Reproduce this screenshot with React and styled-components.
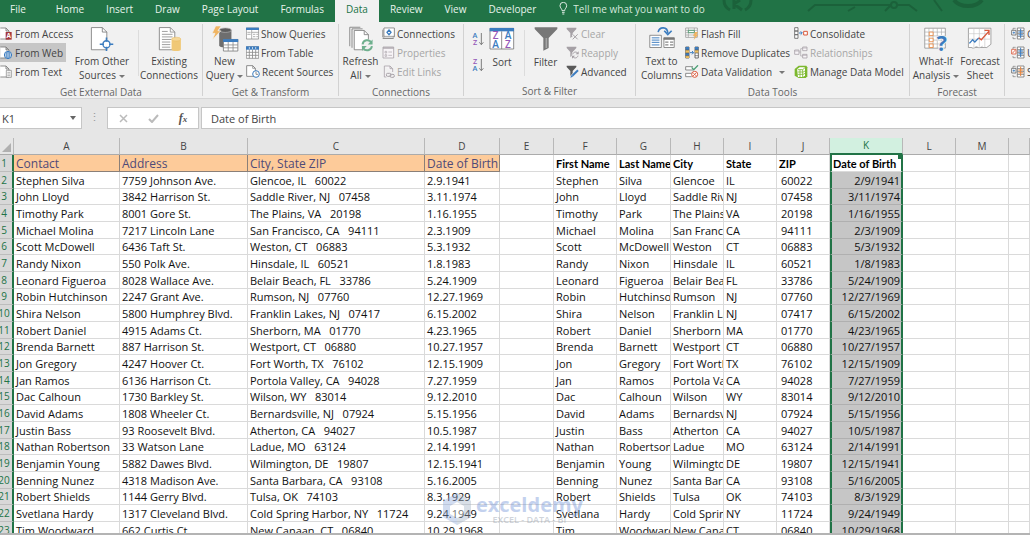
import React from "react";
import styled, { createGlobalStyle, css } from "styled-components";

const GlobalStyle = createGlobalStyle`
  * {
    box-sizing: border-box;
  }
  body {
    margin: 0;
    background: #e6e6e6;
    font-family: "Open Sans", "Noto Sans", sans-serif;
    font-size: 10px;
    color: #444;
  }
  button, input {
    font: inherit;
    color: inherit;
    border: 0;
    padding: 0;
    background: none;
  }
`;

/*========================================================
# Data
========================================================*/
const people = [
  ["Stephen Silva", "7759 Johnson Ave.", "Glencoe", "IL", "60022", "2.9.1941"],
  ["John Lloyd", "3842 Harrison St.", "Saddle River", "NJ", "07458", "3.11.1974"],
  ["Timothy Park", "8001 Gore St.", "The Plains", "VA", "20198", "1.16.1955"],
  ["Michael Molina", "7217 Lincoln Lane", "San Francisco", "CA", "94111", "2.3.1909"],
  ["Scott McDowell", "6436 Taft St.", "Weston", "CT", "06883", "5.3.1932"],
  ["Randy Nixon", "550 Polk Ave.", "Hinsdale", "IL", "60521", "1.8.1983"],
  ["Leonard Figueroa", "8028 Wallace Ave.", "Belair Beach", "FL", "33786", "5.24.1909"],
  ["Robin Hutchinson", "2247 Grant Ave.", "Rumson", "NJ", "07760", "12.27.1969"],
  ["Shira Nelson", "5800 Humphrey Blvd.", "Franklin Lakes", "NJ", "07417", "6.15.2002"],
  ["Robert Daniel", "4915 Adams Ct.", "Sherborn", "MA", "01770", "4.23.1965"],
  ["Brenda Barnett", "887 Harrison St.", "Westport", "CT", "06880", "10.27.1957"],
  ["Jon Gregory", "4247 Hoover Ct.", "Fort Worth", "TX", "76102", "12.15.1909"],
  ["Jan Ramos", "6136 Harrison Ct.", "Portola Valley", "CA", "94028", "7.27.1959"],
  ["Dac Calhoun", "1730 Barkley St.", "Wilson", "WY", "83014", "9.12.2010"],
  ["David Adams", "1808 Wheeler Ct.", "Bernardsville", "NJ", "07924", "5.15.1956"],
  ["Justin Bass", "93 Roosevelt Blvd.", "Atherton", "CA", "94027", "10.5.1987"],
  ["Nathan Robertson", "33 Watson Lane", "Ladue", "MO", "63124", "2.14.1991"],
  ["Benjamin Young", "5882 Dawes Blvd.", "Wilmington", "DE", "19807", "12.15.1941"],
  ["Benning Nunez", "4318 Madison Ave.", "Santa Barbara", "CA", "93108", "5.16.2005"],
  ["Robert Shields", "1144 Gerry Blvd.", "Tulsa", "OK", "74103", "8.3.1929"],
  ["Svetlana Hardy", "1317 Cleveland Blvd.", "Cold Spring Harbor", "NY", "11724", "9.24.1949"],
  ["Tim Woodward", "662 Curtis Ct.", "New Canaan", "CT", "06840", "10.29.1968"],
];

const columns = [
  { name: "A", width: 106 },
  { name: "B", width: 128 },
  { name: "C", width: 177 },
  { name: "D", width: 75 },
  { name: "E", width: 54 },
  { name: "F", width: 63 },
  { name: "G", width: 54 },
  { name: "H", width: 53 },
  { name: "I", width: 53 },
  { name: "J", width: 53 },
  { name: "K", width: 73, selected: true },
  { name: "L", width: 53 },
  { name: "M", width: 53 },
  { name: "" },
];

/*========================================================
# Icons
========================================================*/
// every icon is drawn on a grid three times finer than its size
const Icon = ({ w = 13, h = 13, children }) => (
  <svg width={w} height={h} viewBox={`0 0 ${w * 3} ${h * 3}`} fill="none" aria-hidden="true">
    {children}
  </svg>
);

const Letter = styled.text`
  font-family: "Open Sans", sans-serif;
  font-weight: ${({ $weight }) => $weight || 600};
  font-size: ${({ $size }) => $size || 22}px;
  text-anchor: middle;
  fill: ${({ $color }) => $color};
`;

const SmallPage = () => (
  <path d="M1 3h17l9 9v24H1M18 3v9h9" fill="#fff" stroke="#7a7a7a" strokeWidth="2.5" />
);

const AccessIcon = () => (
  <Icon>
    <SmallPage />
    <rect x="17" y="15" width="18" height="23" fill="#a4373a" />
    <Letter x="26" y="33" $size={19} $weight={700} $color="#fff">A</Letter>
  </Icon>
);
const WebIcon = () => (
  <Icon>
    <SmallPage />
    <circle cx="24" cy="27" r="11" fill="#fff" stroke="#3b7cbf" strokeWidth="3" />
    <path d="M13 27h22M24 16v22M15 21h18M15 33h18" stroke="#3b7cbf" strokeWidth="2" />
    <ellipse cx="24" cy="27" rx="5" ry="11" stroke="#3b7cbf" strokeWidth="2" />
  </Icon>
);
const TextIcon = () => (
  <Icon>
    <SmallPage />
    <path d="M19 16h15v21H19z" fill="#fff" stroke="#7a7a7a" strokeWidth="2" />
    <path d="M22 22h9M22 27h9M22 32h9" stroke="#888" strokeWidth="2" />
  </Icon>
);
const OtherSourcesIcon = () => (
  <Icon w={26} h={28}>
    <path d="M6 8h34l14 14v55H6z" fill="#fff" stroke="#777" strokeWidth="2.5" />
    <path d="M40 8v14h14" stroke="#777" strokeWidth="2.5" />
    <circle cx="53" cy="60" r="15" fill="#f1f1f1" />
    <circle cx="53" cy="60" r="11" fill="#fff" stroke="#3b7cbf" strokeWidth="4" />
    <path d="M53 39v13M53 68v13M32 60h13M61 60h13" stroke="#3b7cbf" strokeWidth="5" />
  </Icon>
);
const ExistingIcon = () => (
  <Icon w={26} h={28}>
    <path d="M9 8h34l14 14v55H9z" fill="#fff" stroke="#777" strokeWidth="2.5" />
    <path d="M43 8v14h14M17 29h33M17 37h33M17 45h30M17 53h26M17 61h26M17 69h26M17 20h18" stroke="#8a8a8a" strokeWidth="2.5" />
    <path d="M47 45v31c0 7 29 7 29 0V45" fill="#f0c877" />
    <ellipse cx="61.500" cy="44" rx="14.500" ry="6" fill="#f5d797" stroke="#e8b85c" strokeWidth="1.500" />
  </Icon>
);
const NewQueryIcon = () => (
  <Icon w={28} h={28}>
    <path d="M24 16v48c0 8 38 8 38 0V16" fill="#6e6e6e" />
    <ellipse cx="43" cy="16" rx="19" ry="7" fill="#5c5c5c" stroke="#bbb" strokeWidth="2" />
    <path d="M13 3h17L20 18h9L3 46l8-20H2z" fill="#f0b562" stroke="#f1f1f1" strokeWidth="2" />
    <path d="M37 45h45v36H37z" fill="#fff" stroke="#777" strokeWidth="2.5" />
    <path d="M36 44h47v9H36z" fill="#3b7cbf" />
    <path d="M37 62h45M37 71h45M52 53v28M67 53v28" stroke="#888" strokeWidth="2.5" />
  </Icon>
);
const ShowQueriesIcon = () => (
  <Icon>
    <path d="M1 3h37v33H1z" fill="#fff" stroke="#777" strokeWidth="2" />
    <path d="M0 2h39v7H0z" fill="#3b7cbf" />
    <path d="M17 9v27M17 16h21M4 16h10M4 22h10M21 22h7M21 29h7M31 22h5M31 29h5" stroke="#8c8c8c" strokeWidth="2" />
  </Icon>
);
const FromTableIcon = () => (
  <Icon>
    <path d="M1 2h37v35H1z" fill="#fff" stroke="#777" strokeWidth="2" />
    <path d="M0 1h39v10H0z" fill="#3b7cbf" />
    <path d="M1 19h37M1 28h37M10 11v26M19.500 11v26M29 11v26" stroke="#8c8c8c" strokeWidth="2.500" />
    <path d="M10 3v6M19.500 3v6M29 3v6" stroke="#fff" strokeWidth="2" />
  </Icon>
);
const RecentIcon = () => (
  <Icon w={14}>
    <path d="M2 2h18l8 8v24H2z" fill="#fff" stroke="#777" strokeWidth="2.5" />
    <path d="M20 2v8h8" stroke="#777" strokeWidth="2" />
    <circle cx="30" cy="27" r="10" fill="#fff" stroke="#3b7cbf" strokeWidth="3" />
    <path d="M30 20v8h6" stroke="#777" strokeWidth="2.500" />
  </Icon>
);
const RefreshIcon = () => (
  <Icon w={26} h={28}>
    <path d="M4 66V7h33" stroke="#777" strokeWidth="2.500" />
    <path d="M11 71V12h33" stroke="#777" strokeWidth="2.500" />
    <path d="M18 17h31l13 13v47H18z" fill="#fff" stroke="#777" strokeWidth="2.500" />
    <path d="M49 17v13h13" stroke="#777" strokeWidth="2.500" />
    <circle cx="58" cy="63" r="19" fill="#f1f1f1" />
    <path d="M44 60c2-14 20-17 27-6M73 66c-2 14-20 17-27 6" stroke="#6fb08e" strokeWidth="6" />
    <path d="M75 45v16H60zM42 81V65h15z" fill="#6fb08e" />
  </Icon>
);
const ConnectionsIcon = () => (
  <Icon>
    <path d="M7 30H2V8M32 30h5V4H6v24" stroke="#777" strokeWidth="2" />
    <path d="M6 3h31v25H6z" fill="#fff" stroke="#777" strokeWidth="2" />
    <path d="M2 34h33" stroke="#777" strokeWidth="3" />
    <path d="M21 9l6 7-6 7-6-7z" stroke="#3b7cbf" strokeWidth="4" />
  </Icon>
);
const PropertiesIcon = () => (
  <Icon>
    <path d="M3 3h32v33H3z" fill="#f7f4f7" stroke="#a9a3a9" strokeWidth="2.500" />
    <path d="M3 6h32" stroke="#a9a3a9" strokeWidth="4" />
    <path d="M9 16h5v5H9zM9 26h5v5H9zM19 18h11M19 28h11" stroke="#a9a3a9" strokeWidth="2" />
  </Icon>
);
const EditLinksIcon = () => (
  <Icon>
    <path d="M7 3h17l8 8v10M7 3v33h6M24 3v8h8" fill="#f7f4f7" stroke="#a9a3a9" strokeWidth="2.500" />
    <rect x="13" y="25" width="14" height="9" rx="4" stroke="#a9a3a9" strokeWidth="3" />
    <rect x="24" y="28" width="13" height="9" rx="4" stroke="#a9a3a9" strokeWidth="3" />
  </Icon>
);
const SortAscIcon = () => (
  <Icon w={12} h={14}>
    <Letter x="9" y="19" $color="#3b7cbf">A</Letter>
    <Letter x="9" y="39" $color="#9457b8">Z</Letter>
    <path d="M28 3v34M22 31l6 7 6-7" stroke="#666" strokeWidth="2.500" />
  </Icon>
);
const SortDescIcon = () => (
  <Icon w={12} h={14}>
    <Letter x="9" y="19" $color="#9457b8">Z</Letter>
    <Letter x="9" y="39" $color="#3b7cbf">A</Letter>
    <path d="M28 3v34M22 31l6 7 6-7" stroke="#666" strokeWidth="2.500" />
  </Icon>
);
const SortIcon = () => (
  <Icon w={26} h={28}>
    <path d="M3 10h71v62H3z" fill="#fff" stroke="#777" strokeWidth="2.500" />
    <path d="M2 9h73v10H2z" fill="#3b7cbf" />
    <path d="M38 19v53" stroke="#777" strokeWidth="2.500" />
    <Letter x="20" y="43" $size={30} $color="#9457b8">Z</Letter>
    <Letter x="20" y="69" $size={30} $color="#3b7cbf">A</Letter>
    <Letter x="57" y="43" $size={30} $color="#3b7cbf">A</Letter>
    <Letter x="57" y="69" $size={30} $color="#9457b8">Z</Letter>
  </Icon>
);
const FilterIcon = () => (
  <Icon w={26} h={28}>
    <path d="M5 7h68v5L47 39v30l-16 8V39L5 12z" fill="#777" />
    <path d="M40 39v30" stroke="#a5a5a5" strokeWidth="5" />
  </Icon>
);
const SmallFunnel = ({ color }) => (
  <path d="M2 2h29v4L20 18v10l-7 5V18L2 6z" fill={color} />
);
const ClearIcon = () => (
  <Icon>
    <SmallFunnel color="#a5a0a5" />
    <path d="M20 22l15 15M35 22L20 37" stroke="#f1f1f1" strokeWidth="8" />
    <path d="M20 22l15 15M35 22L20 37" stroke="#a5a0a5" strokeWidth="3" />
  </Icon>
);
const ReapplyIcon = () => (
  <Icon>
    <SmallFunnel color="#a5a0a5" />
    <circle cx="28" cy="27" r="11" fill="#f1f1f1" />
    <path d="M20 25c2-8 12-9 15-3M36 29c-2 8-12 9-15 3" stroke="#a5a0a5" strokeWidth="3" />
    <path d="M38 16v9h-9zM18 38v-9h9z" fill="#a5a0a5" />
  </Icon>
);
const AdvancedIcon = () => (
  <Icon>
    <SmallFunnel color="#595959" />
    <path d="M17 35L36 16" stroke="#f1f1f1" strokeWidth="10" />
    <path d="M19 32L36 16" stroke="#3b7cbf" strokeWidth="6" />
    <path d="M13 38l3-8 5 5z" fill="#3b7cbf" />
  </Icon>
);
const TextToColumnsIcon = () => (
  <Icon w={28} h={28}>
    <path d="M4 32h36v38H4z" fill="#fff" stroke="#777" strokeWidth="2.500" />
    <path d="M10 40h24M10 47h24M10 54h24M10 62h24" stroke="#3b7cbf" strokeWidth="3" />
    <path d="M48 40h32v30H48z" fill="#fff" stroke="#777" strokeWidth="2.500" />
    <path d="M47 39h34v7H47z" fill="#777" />
    <path d="M52 53h10M67 53h10M52 62h10M67 62h10" stroke="#888" strokeWidth="4" />
    <path d="M30 22C34 4 59 4 60 25" stroke="#3b7cbf" strokeWidth="5" />
    <path d="M49 18l11 12 12-12" stroke="#3b7cbf" strokeWidth="5" />
  </Icon>
);
const FlashFillIcon = () => (
  <Icon w={14}>
    <path d="M2 3h35v28H2z" fill="#fff" stroke="#888" strokeWidth="2" />
    <path d="M2 10h35M2 17h35M2 24h35M10 3v28M28 3v28" stroke="#999" strokeWidth="2" />
    <path d="M10 10h18v7H10z" fill="#fff" stroke="#3d8f63" strokeWidth="2.500" />
    <path d="M30 15h9l-5 8h6L26 39l4-12h-6z" fill="#f0b562" />
  </Icon>
);
const RemoveDuplicatesIcon = () => (
  <Icon w={14}>
    <path d="M2 3h10v33H2zM30 3h10v33H30z" fill="#fff" stroke="#555" strokeWidth="2.500" />
    <path d="M2 3h10v9H2zM2 21h10v8H2zM30 3h10v9H30z" fill="#3b7cbf" />
    <path d="M2 12h10v9H2zM2 29h10v7H2zM30 12h10v9H30z" fill="#f0c060" />
    <path d="M2 12h10M2 21h10M2 29h10M30 12h10M30 21h10M30 29h10" stroke="#555" strokeWidth="2" />
    <path d="M15 20h10M21 15l5 5-5 5" stroke="#3b7cbf" strokeWidth="3" />
  </Icon>
);
const ValidationIcon = () => (
  <Icon w={14}>
    <path d="M24 5H2v10h22M20 25H2v10h18" fill="#fff" stroke="#777" strokeWidth="2.500" />
    <path d="M20 7l6 7L39 1" stroke="#4b9e75" strokeWidth="4" />
    <circle cx="29" cy="28" r="9" fill="#fff" stroke="#d9583b" strokeWidth="3" />
    <path d="M24 23l10 10M34 23L24 33" stroke="#d9583b" strokeWidth="2.500" />
  </Icon>
);
const ConsolidateIcon = () => (
  <Icon w={14}>
    <path d="M2 2h10v10H2zM2 12h10v11H2zM2 23h10v11H2z" fill="#fff" stroke="#666" strokeWidth="2.500" />
    <path d="M15 18h9M20 13l5 5-5 5" stroke="#3b7cbf" strokeWidth="3" />
    <path d="M29 13h11v11H29z" fill="#fff" stroke="#d9583b" strokeWidth="3" />
  </Icon>
);
const RelationshipsIcon = () => (
  <Icon w={14}>
    <path d="M2 12h13v13H2zM26 3h13v11H26zM26 25h13v11H26z" fill="#f7f4f7" stroke="#a9a3a9" strokeWidth="2.500" />
    <path d="M15 18h5M26 8h-6v22h6M2 15h13M26 6h13M26 28h13" stroke="#a9a3a9" strokeWidth="2" />
  </Icon>
);
const DataModelIcon = () => (
  <Icon w={14}>
    <path d="M2 12L14 2h23l3 5v27l-5 5H14L2 32z" fill="#7cb82f" />
    <path d="M9 13l8-6h16v25l-7 4H12z" fill="#fff" />
    <path d="M11 14h15v22M18 14v22M11 21h15M11 28h15M26 14l7-6M26 22l7-4M26 29l7-4" stroke="#7cb82f" strokeWidth="2.500" />
  </Icon>
);
const WhatIfIcon = () => (
  <Icon w={26} h={28}>
    <path d="M4 10h64v62H4z" fill="#fff" stroke="#777" strokeWidth="2" />
    <path d="M4 22h64M4 34h64M4 47h64M4 59h64M17 10v62M30 10v62M43 10v62M56 10v62" stroke="#aaa" strokeWidth="2" />
    <path d="M18 22h12v11H18zM18 41h12v11H18zM18 59h12v11H18z" fill="#fff" stroke="#e8833a" strokeWidth="2.500" />
    <Letter x="57" y="80" $size={66} $weight={700} $color="#3b7cbf" stroke="#f1f1f1" strokeWidth="6" paintOrder="stroke">?</Letter>
  </Icon>
);
const ForecastIcon = () => (
  <Icon w={26} h={28}>
    <path d="M3 10h70v50l-13 10H3z" fill="#fff" stroke="#777" strokeWidth="2" />
    <path d="M3 27h70M3 44h70M20 10v60M37 10v60M54 10v60" stroke="#c6c6c6" strokeWidth="2" />
    <path d="M12 70c6 6 12 0 16-4 5 7 13 5 19 0" fill="#fff" stroke="#999" strokeWidth="2" />
    <path d="M6 57l10-11 7 7 12-13" stroke="#3b7cbf" strokeWidth="4" />
    <path d="M35 40l8 6 24-27M53 17h14v14" stroke="#d9583b" strokeWidth="4" />
  </Icon>
);
const OutlineIcon = ({ kind }) => (
  <Icon w={14}>
    <path d="M19 3h20v33H19zM19 11h20M19 19h20M19 28h20" fill="#fff" stroke="#777" strokeWidth="2.500" />
    <path d="M22 15h14M22 23.500h14M29 5v28" stroke={kind === "total" ? "#e8833a" : "#3b7cbf"} strokeWidth="3" />
    <path d="M14 4H6v5M14 35H6v-5" stroke="#777" strokeWidth="2" />
    <path d="M2 10h13v14H2z" fill="#fff" stroke={kind === "ungroup" ? "#d9583b" : "#666"} strokeWidth="2.500" />
    <path d={kind === "ungroup" ? "M4 22l9-10" : "M5 17h7M8.500 13.500v7"} stroke={kind === "ungroup" ? "#d9583b" : "#3b7cbf"} strokeWidth="2.500" />
  </Icon>
);
const BulbIcon = () => (
  <Icon w={9} h={13}>
    <path d="M9 26c0-6-6-8-6-15a10 10 0 0 1 20 0c0 7-6 9-6 15zM9 31h8M10 36h6" stroke="#fff" strokeWidth="2.500" />
  </Icon>
);

/*========================================================
# Tab bar
========================================================*/
const Page = styled.div`
  display: flex;
  flex-direction: column;
  height: 100vh;
  overflow: hidden;
`;

const TabBar = styled.nav`
  position: relative;
  display: flex;
  flex: none;
  height: 22px;
  padding-bottom: 1px;
  background: #217346;
  white-space: nowrap;
`;

const Tab = styled.button`
  padding: 0 11px 4px;
  color: #e8f3ec;
  ${({ $first }) => $first && css`
    padding-left: 10px;
    margin-right: 8px;
  `}
  ${({ $active }) => $active && css`
    margin-bottom: -1px;
    background: #f1f1f1;
    color: #217346;
  `}
`;

const TellMe = styled.label`
  display: flex;
  align-items: center;
  gap: 5px;
  padding: 0 12px 4px;
  color: #d6e8dd;
  input {
    width: 160px;
    outline: 0;
    &::placeholder {
      color: #d6e8dd;
      opacity: 1;
    }
  }
`;

const Circuit = styled.svg`
  position: absolute;
  top: 0;
  right: 0;
`;

/*========================================================
# Ribbon
========================================================*/
const RibbonBar = styled.div`
  display: flex;
  flex: none;
  height: 77px;
  padding-top: 2px;
  background: #f1f1f1;
  border-bottom: 1px solid #d5d5d5;
  overflow: hidden;
`;

const GroupBox = styled.section`
  display: flex;
  flex-direction: column;
  flex: none;
  width: ${({ $width }) => $width}px;
  height: 72px;
  border-right: 1px solid #d2d2d2;
`;

const GroupTools = styled.div`
  display: flex;
  height: 58px;
  padding-left: ${({ $pad }) => $pad || 0}px;
`;

const GroupLabel = styled.div`
  line-height: 20px;
  text-align: center;
  color: #666;
  white-space: nowrap;
`;

const Stack = styled.div`
  display: flex;
  flex-direction: column;
  flex: none;
  width: ${({ $width }) => ($width ? `${$width}px` : "auto")};
`;

const SmallButton = styled.button`
  display: flex;
  align-items: center;
  gap: 2px;
  height: 19px;
  white-space: nowrap;
  color: ${({ disabled }) => (disabled ? "#a6a6a6" : "#444")};
  background: ${({ $hot }) => ($hot ? "#c6c6c6" : "transparent")};
  svg {
    flex: none;
  }
`;

const BigButton = styled.button`
  display: flex;
  flex-direction: column;
  align-items: center;
  flex: none;
  width: ${({ $width }) => $width}px;
  padding-top: 1px;
  line-height: 14px;
  white-space: nowrap;
  svg {
    margin-bottom: 2px;
  }
`;

const SortPair = styled.div`
  display: flex;
  flex-direction: column;
  gap: 12px;
  width: 16px;
  padding: 8px 0 0 2px;
  button {
    height: 14px;
    line-height: 0;
  }
`;

const Divider = styled.div`
  flex: none;
  width: 1px;
  height: 46px;
  margin: 6px 0 0 ${({ $gap }) => $gap || 0}px;
  background: #dcdcdc;
`;

const Caret = styled.span`
  display: inline-block;
  margin-left: ${({ $far }) => ($far ? 4 : 3)}px;
  border: solid transparent;
  border-width: 3px 3px 0;
  border-top-color: #777;
  vertical-align: middle;
`;

const Group = ({ label, width, pad, children }) => (
  <GroupBox $width={width} aria-label={label}>
    <GroupTools $pad={pad}>{children}</GroupTools>
    <GroupLabel>{label}</GroupLabel>
  </GroupBox>
);

const Big = ({ icon, lines, width, caret }) => (
  <BigButton type="button" $width={width}>
    {icon}
    <span>{lines[0]}</span>
    {lines[1] && (
      <span>
        {lines[1]}
        {caret && <Caret />}
      </span>
    )}
  </BigButton>
);

const Small = ({ icon, children, ...rest }) => (
  <SmallButton type="button" {...rest}>
    {icon}
    <span>{children}</span>
  </SmallButton>
);

const Ribbon = () => (
  <RibbonBar>
    <Group label="Get External Data" width={203}>
      <Stack $width={66}>
        <Small icon={<AccessIcon />}>From Access</Small>
        <Small icon={<WebIcon />} $hot>From Web</Small>
        <Small icon={<TextIcon />}>From Text</Small>
      </Stack>
      <Big icon={<OtherSourcesIcon />} lines={["From Other", "Sources"]} width={72} caret />
      <Divider />
      <Big icon={<ExistingIcon />} lines={["Existing", "Connections"]} width={60} />
    </Group>
    <Group label="Get & Transform" width={136}>
      <Big icon={<NewQueryIcon />} lines={["New", "Query"]} width={43} caret />
      <Stack>
        <Small icon={<ShowQueriesIcon />}>Show Queries</Small>
        <Small icon={<FromTableIcon />}>From Table</Small>
        <Small icon={<RecentIcon />}>Recent Sources</Small>
      </Stack>
    </Group>
    <Group label="Connections" width={125}>
      <Big icon={<RefreshIcon />} lines={["Refresh", "All"]} width={43} caret />
      <Stack>
        <Small icon={<ConnectionsIcon />}>Connections</Small>
        <Small icon={<PropertiesIcon />} disabled>Properties</Small>
        <Small icon={<EditLinksIcon />} disabled>Edit Links</Small>
      </Stack>
    </Group>
    <Group label="Sort & Filter" width={172} pad={5}>
      <SortPair>
        <button type="button" aria-label="Sort A to Z"><SortAscIcon /></button>
        <button type="button" aria-label="Sort Z to A"><SortDescIcon /></button>
      </SortPair>
      <Big icon={<SortIcon />} lines={["Sort"]} width={34} />
      <Divider $gap={5} />
      <Big icon={<FilterIcon />} lines={["Filter"]} width={41} />
      <Stack>
        <Small icon={<ClearIcon />} disabled>Clear</Small>
        <Small icon={<ReapplyIcon />} disabled>Reapply</Small>
        <Small icon={<AdvancedIcon />}>Advanced</Small>
      </Stack>
    </Group>
    <Group label="Data Tools" width={274} pad={2}>
      <Big icon={<TextToColumnsIcon />} lines={["Text to", "Columns"]} width={47} />
      <Stack $width={109}>
        <Small icon={<FlashFillIcon />}>Flash Fill</Small>
        <Small icon={<RemoveDuplicatesIcon />}>Remove Duplicates</Small>
        <Small icon={<ValidationIcon />}>Data Validation <Caret $far /></Small>
      </Stack>
      <Stack>
        <Small icon={<ConsolidateIcon />}>Consolidate</Small>
        <Small icon={<RelationshipsIcon />} disabled>Relationships</Small>
        <Small icon={<DataModelIcon />}>Manage Data Model</Small>
      </Stack>
    </Group>
    <Group label="Forecast" width={95} pad={4}>
      <Big icon={<WhatIfIcon />} lines={["What-If", "Analysis"]} width={44} caret />
      <Big icon={<ForecastIcon />} lines={["Forecast", "Sheet"]} width={44} />
    </Group>
    <Group label="" width={120} pad={6}>
      <Stack>
        <Small icon={<OutlineIcon kind="group" />}>Group</Small>
        <Small icon={<OutlineIcon kind="ungroup" />}>Ungroup</Small>
        <Small icon={<OutlineIcon kind="total" />}>Subtotal</Small>
      </Stack>
    </Group>
  </RibbonBar>
);

/*========================================================
# Formula bar
========================================================*/
const FormulaRow = styled.div`
  display: flex;
  flex: none;
  height: 39px;
  padding: 8px 0 9px;
  font-size: 11px;
  background: #e6e6e6;
`;

const NameBox = styled.div`
  display: flex;
  align-items: center;
  justify-content: space-between;
  width: 82px;
  padding: 0 5px 0 2px;
  background: #fff;
  border: 1px solid #c6c6c6;
  border-left: 0;
  input {
    width: 50px;
    outline: 0;
  }
  button {
    line-height: 0;
  }
`;

const Grip = styled.div`
  width: 25px;
  text-align: center;
  line-height: 20px;
  color: #999;
`;

const FormulaButtons = styled.div`
  display: flex;
  align-items: center;
  justify-content: space-around;
  width: 92px;
  margin-right: 2px;
  background: #fff;
  border: 1px solid #c6c6c6;
  button {
    width: 20px;
    line-height: 0;
  }
`;

const FxButton = styled.button`
  && {
    font: italic bold 12px "Liberation Serif", serif;
    color: #555;
  }
  small {
    font-size: 9px;
  }
`;

const FormulaInput = styled.input`
  flex: 1;
  min-width: 0;
  padding: 0 9px;
  background: #fff;
  border: 1px solid #c6c6c6;
  border-right: 0;
  outline: 0;
`;

const FormulaBar = () => (
  <FormulaRow>
    <NameBox>
      <input aria-label="Name box" defaultValue="K1" />
      <button type="button" aria-label="Open names">
        <svg width="6" height="4" viewBox="0 0 6 4"><path d="M0 0h6L3 4z" fill="#666" /></svg>
      </button>
    </NameBox>
    <Grip>⋮</Grip>
    <FormulaButtons>
      <button type="button" aria-label="Cancel">
        <svg width="9" height="9" viewBox="0 0 9 9"><path d="M1 1l7 7M8 1L1 8" stroke="#bbb" strokeWidth="1.500" /></svg>
      </button>
      <button type="button" aria-label="Enter">
        <svg width="11" height="9" viewBox="0 0 11 9" fill="none"><path d="M1 5l3 3 6-7" stroke="#bbb" strokeWidth="2" /></svg>
      </button>
      <FxButton type="button">f<small>x</small></FxButton>
    </FormulaButtons>
    <FormulaInput aria-label="Formula" defaultValue="Date of Birth" />
  </FormulaRow>
);

/*========================================================
# Sheet
========================================================*/
const SheetArea = styled.main`
  position: relative;
  flex: 1;
  min-height: 0;
  overflow: hidden;
  background: #fff;
  border-bottom: 2px solid #b4b4b4;
`;

const Table = styled.table`
  width: 100%;
  table-layout: fixed;
  border-collapse: separate;
  border-spacing: 0;
  font-size: 11px;
  line-height: 15px;
  color: #111;
  tr {
    height: 17px;
  }
  tbody tr:nth-child(3n) {
    height: 16px;
  }
`;

const ColumnHead = styled.th`
  height: 17px;
  padding: 0;
  font-weight: 400;
  font-size: 10px;
  color: ${({ $selected }) => ($selected ? "#217346" : "#444")};
  background: ${({ $selected }) => ($selected ? "#d2f0e0" : "#e6e6e6")};
  border-right: 1px solid #b8b8b8;
  border-bottom: ${({ $selected }) => ($selected ? "2px solid #217346" : "1px solid #ababab")};
`;

const Corner = styled.th`
  padding: 0 2px 2px 0;
  text-align: right;
  vertical-align: bottom;
  line-height: 0;
  background: #e6e6e6;
  border-right: 1px solid #b8b8b8;
  border-bottom: 1px solid #ababab;
`;

const RowHead = styled.th`
  padding: 0;
  font-weight: 400;
  font-size: 10px;
  color: #217346;
  background: #d8d8d8;
  border-right: 2px solid #217346;
  border-bottom: 1px solid #bdbdbd;
  overflow: hidden;
  span {
    display: flex;
    justify-content: center;
    width: 8px;
  }
`;

const Cell = styled.td`
  position: relative;
  padding: 0 0 0 2px;
  white-space: pre;
  overflow: hidden;
  border-right: 1px solid #dadada;
  border-bottom: 1px solid #dadada;
  ${({ $header }) => $header && css`
    font-family: Lato, "Open Sans", sans-serif;
    font-weight: 700;
    color: #000;
  `}
  ${({ $orange }) => $orange && css`
    font-size: 12px;
    font-weight: 400;
    color: #4f4a78;
    background: #fdcb9a;
    border-color: #8a7f78;
  `}
  ${({ $zip }) => $zip && css`
    padding-left: 4px;
  `}
  ${({ $picked }) => $picked && css`
    padding: 0 1px;
    border-left: 2px solid #217346;
    border-right: 2px solid #217346;
  `}
  ${({ $picked, $header }) => $picked && !$header && css`
    text-align: right;
    background: #c6c6c6;
    border-bottom-color: #b0b0b0;
  `}
`;

const FillHandle = styled.i`
  position: absolute;
  top: 0;
  right: 0;
  width: 3px;
  height: 4px;
  background: #217346;
`;

const Watermark = styled.div`
  position: absolute;
  bottom: 8px;
  left: 43%;
  display: flex;
  align-items: center;
  gap: 5px;
  opacity: 0.4;
  pointer-events: none;
`;

const WatermarkText = styled.div`
  color: #6b8fd6;
  font-size: 20px;
  font-weight: 700;
  line-height: 20px;
  small {
    display: block;
    color: #8c96a5;
    font-size: 9px;
    font-weight: 600;
    line-height: 9px;
    text-align: center;
  }
`;

const Sheet = () => (
  <SheetArea>
    <Table>
      <colgroup>
        <col width="14" />
        {columns.map((c, index) => <col key={index} width={c.width} />)}
      </colgroup>
      <thead>
        <tr>
          <Corner>
            <svg width="9" height="9" viewBox="0 0 9 9"><path d="M9 0v9H0z" fill="#b0b0b0" /></svg>
          </Corner>
          {columns.map((c, index) => (
            <ColumnHead key={index} scope="col" $selected={c.selected}>{c.name}</ColumnHead>
          ))}
        </tr>
      </thead>
      <tbody>
        <tr>
          <RowHead scope="row"><span>1</span></RowHead>
          {["Contact", "Address", "City, State ZIP", "Date of Birth"].map((e) => (
            <Cell key={e} $orange>{e}</Cell>
          ))}
          <Cell />
          {["First Name", "Last Name", "City", "State", "ZIP"].map((e) => (
            <Cell key={e} $header>{e}</Cell>
          ))}
          <Cell $header $picked>Date of Birth<FillHandle /></Cell>
          <Cell />
          <Cell />
          <Cell />
        </tr>
        {people.map(([name, address, city, state, zip, birth], index) => {
          const [first, last] = name.split(" ");
          return (
            <tr key={name}>
              <RowHead scope="row"><span>{index + 2}</span></RowHead>
              <Cell>{name}</Cell>
              <Cell>{address}</Cell>
              <Cell>{`${city}, ${state}   ${zip}`}</Cell>
              <Cell>{birth}</Cell>
              <Cell />
              <Cell>{first}</Cell>
              <Cell>{last}</Cell>
              <Cell>{city}</Cell>
              <Cell>{state}</Cell>
              <Cell $zip>{zip}</Cell>
              <Cell $picked>{birth.replaceAll(".", "/")}</Cell>
              <Cell />
              <Cell />
              <Cell />
            </tr>
          );
        })}
      </tbody>
    </Table>
    <Watermark>
      <svg width="28" height="32" viewBox="0 0 28 32">
        <path d="M14 0l14 8v16l-14 8-14-8V8z" fill="#8fa9dc" />
        <path d="M14 0l14 8v16l-14 8z" fill="#9fb0c4" />
        <path d="M14 9l7 4v8l-7 4-7-4v-8z" fill="#fff" />
      </svg>
      <WatermarkText>
        exceldemy
        <small>EXCEL - DATA - BI</small>
      </WatermarkText>
    </Watermark>
  </SheetArea>
);

const tabs = ["File", "Home", "Insert", "Draw", "Page Layout", "Formulas", "Data", "Review", "View", "Developer"];

export default function App() {
  return (
    <Page>
      <GlobalStyle />
      <TabBar>
        <Circuit width="310" height="12" viewBox="0 0 310 12" fill="none" stroke="#1b613a" strokeWidth="2" aria-hidden="true">
          <path d="M4 0c0 5 2 8 6 10M31 0c0 5-2 8-6 10M14 0v9M14 4l8 6M14 4l6-4" strokeWidth="3" />
          <path d="M88 11l7-6h76M128 11l7-4M177 5h12l8 6M214 0l8 11M171 5l-6 6" />
          <circle cx="174" cy="5" r="3" />
          <path d="M234 0c6 8 22 8 28 0" strokeWidth="4" />
        </Circuit>
        {tabs.map((e) => (
          <Tab key={e} type="button" $first={e === "File"} $active={e === "Data"}>{e}</Tab>
        ))}
        <TellMe>
          <BulbIcon />
          <input aria-label="Tell me what you want to do" placeholder="Tell me what you want to do" />
        </TellMe>
      </TabBar>
      <Ribbon />
      <FormulaBar />
      <Sheet />
    </Page>
  );
}
